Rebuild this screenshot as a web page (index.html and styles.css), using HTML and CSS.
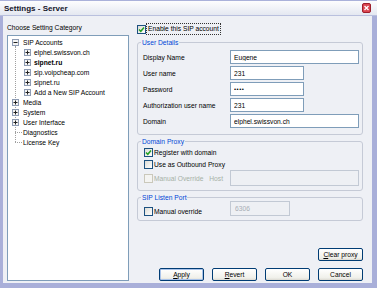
FILE: index.html
```html
<!DOCTYPE html>
<html>
<head>
<meta charset="utf-8">
<link rel="stylesheet" href="styles.css">
</head>
<body>
<div class="window">
  <div class="titlebar">
    <span class="title">Settings - Server</span>
    <svg class="close" width="9" height="10" viewBox="0 0 9 10"><rect x="0.5" y="0.5" width="8" height="9" rx="1.5" fill="#db4550" stroke="#9c1f2c"/><path d="M2.5 3 L6.5 7 M6.5 3 L2.5 7" stroke="#fff" stroke-width="1.3"/></svg>
  </div>
  <div class="client">
    <div class="leftcol">
      <div class="caption">Choose Setting Category</div>
      <div class="tree">
        <div class="root">
          <div class="node"><svg class="exp" width="7" height="7" viewBox="0 0 7 7"><rect x="0.5" y="0.5" width="6" height="6" fill="#f4f4f4" stroke="#8d9bb3"/><path d="M1.5 3.5 H5.5" stroke="#222"/></svg><span class="lbl">SIP Accounts</span></div>
          <div class="node child"><svg class="exp" width="7" height="7" viewBox="0 0 7 7"><rect x="0.5" y="0.5" width="6" height="6" fill="#f4f4f4" stroke="#8d9bb3"/><path d="M1.5 3.5 H5.5 M3.5 1.5 V5.5" stroke="#222"/></svg><span class="lbl sel">elphel.swissvon.ch</span></div>
          <div class="node child"><svg class="exp" width="7" height="7" viewBox="0 0 7 7"><rect x="0.5" y="0.5" width="6" height="6" fill="#f4f4f4" stroke="#8d9bb3"/><path d="M1.5 3.5 H5.5 M3.5 1.5 V5.5" stroke="#222"/></svg><span class="lbl bold">sipnet.ru</span></div>
          <div class="node child"><svg class="exp" width="7" height="7" viewBox="0 0 7 7"><rect x="0.5" y="0.5" width="6" height="6" fill="#f4f4f4" stroke="#8d9bb3"/><path d="M1.5 3.5 H5.5 M3.5 1.5 V5.5" stroke="#222"/></svg><span class="lbl">sip.voipcheap.com</span></div>
          <div class="node child"><svg class="exp" width="7" height="7" viewBox="0 0 7 7"><rect x="0.5" y="0.5" width="6" height="6" fill="#f4f4f4" stroke="#8d9bb3"/><path d="M1.5 3.5 H5.5 M3.5 1.5 V5.5" stroke="#222"/></svg><span class="lbl">sipnet.ru</span></div>
          <div class="node child"><svg class="exp" width="7" height="7" viewBox="0 0 7 7"><rect x="0.5" y="0.5" width="6" height="6" fill="#f4f4f4" stroke="#8d9bb3"/><path d="M1.5 3.5 H5.5 M3.5 1.5 V5.5" stroke="#222"/></svg><span class="lbl">Add a New SIP Account</span></div>
          <div class="node"><svg class="exp" width="7" height="7" viewBox="0 0 7 7"><rect x="0.5" y="0.5" width="6" height="6" fill="#f4f4f4" stroke="#8d9bb3"/><path d="M1.5 3.5 H5.5 M3.5 1.5 V5.5" stroke="#222"/></svg><span class="lbl">Media</span></div>
          <div class="node"><svg class="exp" width="7" height="7" viewBox="0 0 7 7"><rect x="0.5" y="0.5" width="6" height="6" fill="#f4f4f4" stroke="#8d9bb3"/><path d="M1.5 3.5 H5.5 M3.5 1.5 V5.5" stroke="#222"/></svg><span class="lbl">System</span></div>
          <div class="node"><svg class="exp" width="7" height="7" viewBox="0 0 7 7"><rect x="0.5" y="0.5" width="6" height="6" fill="#f4f4f4" stroke="#8d9bb3"/><path d="M1.5 3.5 H5.5 M3.5 1.5 V5.5" stroke="#222"/></svg><span class="lbl">User Interface</span></div>
          <div class="node leaf"><span class="hline"></span><span class="lbl">Diagnostics</span></div>
          <div class="node leaf"><span class="hline"></span><span class="lbl">License Key</span></div>
        </div>
      </div>
    </div>
    <div class="rightcol">
      <div class="enable">
        <span class="cb"><svg width="7" height="7" viewBox="0 0 7 7"><path d="M1 3.5 L2.8 5.3 L6 1.5" fill="none" stroke="#21a121" stroke-width="1.5"/></svg></span>
        <span class="focus">Enable this SIP account</span>
      </div>
      <fieldset class="group details">
        <legend>User Details</legend>
        <div class="form">
          <span>Display Name</span><input class="wide" value="Eugene">
          <span>User name</span><input class="short" value="231">
          <span>Password</span><input class="short pw" value="••••">
          <span>Authorization user name</span><input class="short" value="231">
          <span>Domain</span><input class="wide" value="elphel.swissvon.ch">
        </div>
      </fieldset>
      <fieldset class="group proxy">
        <legend>Domain Proxy</legend>
        <div class="cbrow"><span class="cb"><svg width="7" height="7" viewBox="0 0 7 7"><path d="M1 3.5 L2.8 5.3 L6 1.5" fill="none" stroke="#21a121" stroke-width="1.5"/></svg></span><span>Register with domain</span></div>
        <div class="cbrow"><span class="cb"></span><span>Use as Outbound Proxy</span></div>
        <div class="cbrow hostrow"><span class="cb disabled"></span><span class="dis grow">Manual Override</span><span class="dis host">Host</span><input class="wide tall" disabled></div>
      </fieldset>
      <fieldset class="group port">
        <legend>SIP Listen Port</legend>
        <div class="cbrow portrow"><span class="cbwrap"><span class="cb"></span><span>Manual override</span></span><input class="port-in" disabled value="6306"></div>
      </fieldset>
      <div class="spacer"></div>
      <div class="btnrow clear"><button class="btn"><u>C</u>lear proxy</button></div>
      <div class="btnrow main">
        <button class="btn def"><u>A</u>pply</button>
        <button class="btn"><u>R</u>evert</button>
        <button class="btn">OK</button>
        <button class="btn">Cancel</button>
      </div>
    </div>
  </div>
</div>
</body>
</html>
```
FILE: styles.css
```css
* { box-sizing: border-box; }
html, body { margin: 0; padding: 0; }
body {
  width: 377px;
  height: 288px;
  overflow: hidden;
  font-family: "Liberation Sans", Arial, sans-serif;
  font-size: 6.7px;
  color: #000;
}
.window {
  width: 377px;
  height: 288px;
  display: flex;
  flex-direction: column;
  background: #a9afd9;
}
.titlebar {
  height: 16px;
  display: flex;
  align-items: center;
  justify-content: space-between;
  padding: 0 6px 0 4px;
  background: linear-gradient(#fdfdfe, #e4e8f1);
  border-top: 1px solid #aab1da;
  border-bottom: 1px solid #b9c0de;
}
.title {
  font-weight: bold;
  font-size: 8px;
  color: #15152a;
}
.close { display: block; }
.client {
  flex: 1;
  display: flex;
  gap: 8px;
  margin: 0 5px 5px 3px;
  background: #eef0f5;
  padding: 7px 9px 2px 4px;
}
.leftcol {
  width: 122px;
  display: flex;
  flex-direction: column;
}
.caption {
  height: 10px;
  line-height: 10px;
  margin-bottom: 2px;
}
.tree {
  flex: 1;
  background: #fff;
  border: 1px solid #7f9db9;
  padding-top: 1px;
}
.root { position: relative; }
.root::before {
  content: "";
  position: absolute;
  left: 7px;
  top: 9px;
  height: 96px;
  border-left: 1px dotted #a0a0a0;
}
.node {
  height: 10px;
  display: flex;
  align-items: center;
  padding-left: 4px;
  white-space: nowrap;
  position: relative;
}
.node .exp { display: block; margin-right: 4px; position: relative; }
.node.child { padding-left: 16px; }
.node.child .exp { margin-right: 3px; }
.lbl.bold { font-weight: bold; }
.node.leaf { padding-left: 7px; }
.hline {
  width: 7px;
  border-top: 1px dotted #a0a0a0;
  margin-right: 1px;
}
.rightcol {
  flex: 1;
  display: flex;
  flex-direction: column;
}
.enable {
  height: 12px;
  display: flex;
  align-items: center;
}
.cb {
  width: 9px;
  height: 9px;
  border: 1px solid #1c5180;
  background: linear-gradient(135deg, #dcdcd6, #fff);
  display: flex;
  align-items: center;
  justify-content: center;
  flex: none;
}
.cb svg { display: block; }
.cb.disabled {
  border-color: #cac8bb;
  background: #f4f4f2;
}
.focus {
  margin-left: 1px;
  padding: 0 1px;
  line-height: 10px;
  outline: 1px dotted #333;
  outline-offset: 0;
}
.group {
  margin: 3px 0 0;
  padding: 3px 3px 6px 5px;
  border: 1px solid #c5cad6;
  border-radius: 3px;
  min-width: 0;
}
.group legend {
  color: #0046d5;
  padding: 0 1px;
  margin-left: -2px;
  line-height: 9px;
}
.form {
  display: grid;
  grid-template-columns: 87px auto;
  row-gap: 2px;
  align-items: center;
}
input {
  height: 14px;
  border: 1px solid #7f9db9;
  font-family: "Liberation Sans", Arial, sans-serif;
  font-size: 6.7px;
  padding: 0 3px;
  margin: 0;
  background: #fff;
  color: #000;
  outline: none;
}
input.wide { width: 129px; }
input.short { width: 74px; }
input.pw { letter-spacing: 0.5px; font-size: 6px; }
input:disabled {
  background: #eef0f4;
  border-color: #c2c9d4;
  color: #a8aeb4;
}
input.tall { height: 16px; }
.proxy { margin-top: 2px; padding-top: 0; padding-bottom: 4px; }
.cbrow {
  height: 12px;
  display: flex;
  align-items: center;
  padding-left: 1px;
  gap: 1px;
}
.hostrow { height: 16px; }
.dis { color: #a6b0a6; }
.grow { flex: 1; }
.host { margin-right: 6px; }
.port { margin-top: 2px; padding-top: 0; padding-bottom: 4px; }
.portrow { height: 15px; margin-top: -1px; gap: 0; }
.cbwrap {
  width: 86px;
  display: flex;
  align-items: center;
  gap: 1px;
  margin-top: 5px;
}
.port-in { width: 60px; height: 15px; padding: 0 4px; }
.spacer { flex: 1; }
.btnrow {
  display: flex;
  justify-content: flex-end;
  gap: 8px;
}
.btnrow.clear { margin-bottom: 7px; }
.btn {
  width: 45px;
  height: 13px;
  padding: 0;
  margin: 0;
  border: 1px solid #003c74;
  border-radius: 2px;
  background: linear-gradient(#ffffff, #f0f0ea 80%, #dcdad2);
  font-family: "Liberation Sans", Arial, sans-serif;
  font-size: 6.7px;
  color: #000;
  line-height: 11px;
}
.btn.def { box-shadow: inset 0 0 0 1px #a9c3ea; }
```
